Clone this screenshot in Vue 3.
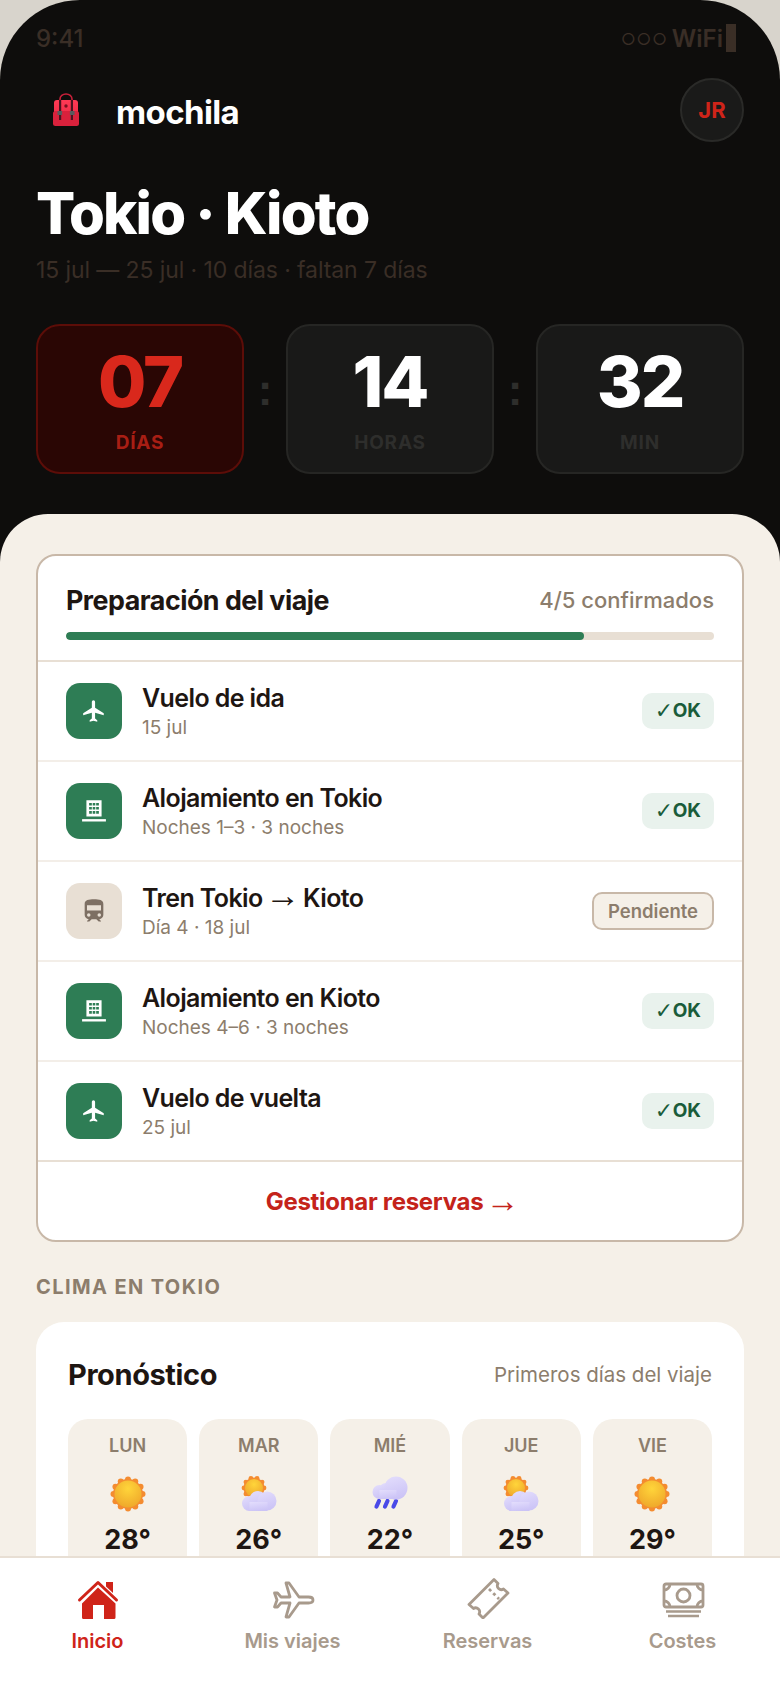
<template>
  <div class="phone">
    <div class="scroll">
      <header class="hero">
        <div class="status">
          <span class="time">9:41</span>
          <span class="status-right">
            <span class="dots">○○○</span>
            <span>WiFi</span>
            <span class="battery"></span>
          </span>
        </div>

        <div class="topbar">
          <div class="brand">
            <span class="logo">
              <svg viewBox="0 0 28 34" width="28" height="34">
                <defs>
                  <linearGradient id="bag" x1="0" y1="0" x2="0" y2="1">
                    <stop offset="0" stop-color="#ff3a55" />
                    <stop offset="1" stop-color="#e8243f" />
                  </linearGradient>
                </defs>
                <path d="M8 8V6a6 5 0 0 1 12 0v2" fill="none" stroke="#c8203a" stroke-width="1.6" />
                <path d="M5 7h18a3 3 0 0 1 3 3v22H2V10a3 3 0 0 1 3-3z" fill="url(#bag)" />
                <rect x="1" y="18" width="26" height="15" rx="2.5" fill="#d9213c" />
                <rect x="7" y="7" width="2.2" height="20" fill="#4a1420" />
                <rect x="18.800" y="7" width="2.2" height="20" fill="#4a1420" />
                <rect x="5.500" y="18" width="4.600" height="4" fill="#5a5a5e" />
                <rect x="17.900" y="18" width="4.600" height="4" fill="#5a5a5e" />
                <circle cx="14" cy="13" r="1.700" fill="#7a1020" />
              </svg>
            </span>
            <span class="brand-name">mochila</span>
          </div>
          <div class="avatar">JR</div>
        </div>

        <h1 class="trip">Tokio · Kioto</h1>
        <p class="dates">15 jul — 25 jul · 10 días · faltan 7 días</p>

        <div class="countdown">
          <template v-for="(c, i) in countdown" :key="c.label">
            <span v-if="i > 0" class="colon">:</span>
            <div class="count" :class="{ hot: c.hot }">
              <div class="count-num">{{ c.value }}</div>
              <div class="count-label">{{ c.label }}</div>
            </div>
          </template>
        </div>
      </header>

      <main class="sheet">
        <section class="prep">
          <div class="prep-head">
            <div class="prep-title">
              <h2>Preparación del viaje</h2>
              <span>4/5 confirmados</span>
            </div>
            <div class="bar"><div class="bar-fill" :style="{ width: progress + '%' }"></div></div>
          </div>

          <div v-for="b in bookings" :key="b.title" class="row">
            <span class="row-icon" :class="{ pending: !b.ok }">
              <svg v-if="b.icon === 'plane'" viewBox="0 0 24 24" width="26" height="26" fill="#fff">
                <path d="M21 16v-2l-8-5V3.500a1.500 1.500 0 0 0-3 0V9l-8 5v2l8-2.500V19l-2 1.500V22l3.500-1 3.500 1v-1.500L13 19v-5.500z" />
              </svg>
              <svg v-else-if="b.icon === 'hotel'" viewBox="0 0 24 24" width="26" height="26">
                <path fill="#fff" fill-rule="evenodd" d="M5 2h14v15H5zM7.500 4.500v2.500h2.500V4.500zM10.800 4.500v2.500h2.400V4.500zM14 4.500v2.500h2.500V4.500zM7.500 8.200v2.500h2.500V8.200zM10.800 8.200v2.500h2.400V8.200zM14 8.200v2.500h2.500V8.200zM7.500 12v2.500h2.500V12zM10.800 12v2.500h2.400V12zM14 12v2.500h2.500V12z" />
                <rect x="1" y="19.500" width="22" height="2.200" fill="#fff" />
              </svg>
              <svg v-else viewBox="0 0 24 24" width="28" height="28" fill="#7d6f63">
                <path fill-rule="evenodd" d="M12 2c-4.500 0-8 .5-8 4v9.500C4 17.400 5.600 19 7.500 19L6 20.500V21h2l2-2h4l2 2h2v-.5L16.500 19c1.900 0 3.500-1.600 3.500-3.500V6c0-3.500-3.500-4-8-4zM6 7h12v4.500H6zM7.500 14a1.500 1.500 0 1 0 0 3 1.500 1.500 0 0 0 0-3zm9 0a1.500 1.500 0 1 0 0 3 1.500 1.500 0 0 0 0-3z" />
              </svg>
            </span>
            <div class="row-text">
              <div class="row-title">
                <template v-if="b.to">{{ b.title }} <span class="arrow">→</span> {{ b.to }}</template>
                <template v-else>{{ b.title }}</template>
              </div>
              <div class="row-sub">{{ b.sub }}</div>
            </div>
            <span v-if="b.ok" class="tag ok"><span class="check">✓</span>OK</span>
            <span v-else class="tag wait">Pendiente</span>
          </div>

          <div class="manage">Gestionar reservas&nbsp;<span class="arrow">→</span></div>
        </section>

        <h3 class="section">CLIMA EN TOKIO</h3>

        <section class="weather">
          <div class="weather-head">
            <h2>Pronóstico</h2>
            <span>Primeros días del viaje</span>
          </div>
          <div class="days">
            <div v-for="d in days" :key="d.name" class="day">
              <div class="day-name">{{ d.name }}</div>
              <svg class="day-icon" viewBox="0 0 36 36" width="36" height="36">
                <defs>
                  <radialGradient :id="'s' + d.name" cx="0.5" cy="0.3" r="0.75">
                    <stop offset="0" stop-color="#ffd53a" />
                    <stop offset="1" stop-color="#eea52a" />
                  </radialGradient>
                  <linearGradient :id="'c' + d.name" x1="0.2" y1="0" x2="0.5" y2="1">
                    <stop offset="0" stop-color="#e2dcfc" />
                    <stop offset="1" stop-color="#cbc3f6" />
                  </linearGradient>
                </defs>
                <g v-if="d.kind === 'sun'">
                  <circle v-for="n in 12" :key="n" :cx="18 + 14.500 * Math.cos(n * 0.5236)" :cy="18 + 14.500 * Math.sin(n * 0.5236)" r="3" fill="#f48c30" />
                  <circle cx="18" cy="18" r="15" fill="#f48c30" />
                  <circle cx="18" cy="18" r="13.500" :fill="`url(#s${d.name})`" />
                </g>
                <g v-else-if="d.kind === 'cloud'">
                  <circle v-for="n in 10" :key="n" :cx="13 + 10 * Math.cos(n * 0.6283)" :cy="12 + 10 * Math.sin(n * 0.6283)" r="2.400" fill="#f48c30" />
                  <circle cx="13" cy="12" r="10.500" fill="#f48c30" />
                  <circle cx="13" cy="12" r="9" :fill="`url(#s${d.name})`" />
                  <g :fill="`url(#c${d.name})`">
                    <circle cx="8.500" cy="27.500" r="7.500" />
                    <circle cx="17" cy="24" r="9" />
                    <circle cx="26" cy="25" r="9.500" />
                    <rect x="8.500" y="26" width="18" height="9" />
                  </g>
                </g>
                <g v-else>
                  <path d="M7 25l-2.500 5.500M15.500 25 13 30.500M24 25l-2.500 5.500" stroke="#4a4ae8" stroke-width="4.200" stroke-linecap="round" fill="none" />
                  <g :fill="`url(#c${d.name})`">
                    <circle cx="7.500" cy="16" r="7" />
                    <circle cx="14" cy="14" r="7" />
                    <circle cx="24" cy="12" r="11.500" />
                    <rect x="7.500" y="14" width="17" height="9" />
                  </g>
                </g>
              </svg>
              <div class="day-temp">{{ d.temp }}</div>
            </div>
          </div>
        </section>
      </main>
    </div>

    <nav class="nav">
      <div v-for="n in nav" :key="n.label" class="nav-item" :class="{ active: n.active }">
        <svg v-if="n.icon === 'home'" viewBox="0 0 44 44" width="44" height="44">
          <path d="M3.500 25 22 7.500 40.500 25" fill="none" stroke="#cf2419" stroke-width="3" stroke-linecap="round" stroke-linejoin="round" />
          <path d="M30 7h7v11l-7-6.500z" fill="#cf2419" />
          <path fill="#cf2419" d="M22 12.500 39.500 28.500V42.500a1.500 1.500 0 0 1-1.500 1.500H28V30H17V44H7.500A1.500 1.500 0 0 1 6 42.500V28.500z" />
        </svg>
        <svg v-else-if="n.icon === 'plane'" viewBox="0 0 44 44" width="44" height="44" fill="none" stroke="#a89a8c" stroke-width="2.800" stroke-linejoin="round">
          <path d="M42 25c0-2-2-3-4.500-3H28L18 8h-3l4 14H10l-3.500-4H3.500L6 25l-2.500 7h3L10 28h9l-4 14h3l10-14h9.500C40 28 42 27 42 25z" />
        </svg>
        <svg v-else-if="n.icon === 'ticket'" viewBox="0 0 44 44" width="44" height="44" fill="none" stroke="#a89a8c" stroke-width="2.800" stroke-linejoin="round">
          <path d="M28 4.500 32 8.500a4 4 0 0 0 5.500 5.500L42 18 17 43 13 39a4 4 0 0 0-5.500-5.500L3 29.500z" />
          <path d="M23 14l10 10" stroke-dasharray="3 3" />
        </svg>
        <svg v-else viewBox="0 0 44 44" width="44" height="44" fill="none" stroke="#a89a8c" stroke-width="2.800">
          <rect x="3" y="9" width="39" height="23" rx="2" />
          <circle cx="22.500" cy="20.500" r="6.500" />
          <path d="M3 15a6 6 0 0 0 6-6M36 9a6 6 0 0 0 6 6M3 26a6 6 0 0 1 6 6M36 32a6 6 0 0 1 6-6" />
          <path d="M5 36.500h35M7 41h31" stroke-width="2.400" />
        </svg>
        <span class="nav-label">{{ n.label }}</span>
      </div>
    </nav>
  </div>
</template>

<script setup>
const progress = 80

const countdown = [
  { value: '07', label: 'DÍAS', hot: true },
  { value: '14', label: 'HORAS' },
  { value: '32', label: 'MIN' },
]

const bookings = [
  { title: 'Vuelo de ida', sub: '15 jul', icon: 'plane', ok: true },
  { title: 'Alojamiento en Tokio', sub: 'Noches 1–3 · 3 noches', icon: 'hotel', ok: true },
  { title: 'Tren Tokio', to: 'Kioto', sub: 'Día 4 · 18 jul', icon: 'train', ok: false },
  { title: 'Alojamiento en Kioto', sub: 'Noches 4–6 · 3 noches', icon: 'hotel', ok: true },
  { title: 'Vuelo de vuelta', sub: '25 jul', icon: 'plane', ok: true },
]

const days = [
  { name: 'LUN', temp: '28°', kind: 'sun' },
  { name: 'MAR', temp: '26°', kind: 'cloud' },
  { name: 'MIÉ', temp: '22°', kind: 'rain' },
  { name: 'JUE', temp: '25°', kind: 'cloud' },
  { name: 'VIE', temp: '29°', kind: 'sun' },
]

const nav = [
  { label: 'Inicio', icon: 'home', active: true },
  { label: 'Mis viajes', icon: 'plane' },
  { label: 'Reservas', icon: 'ticket' },
  { label: 'Costes', icon: 'money' },
]
</script>

<style>
html, body {
  margin: 0;
  background: #d8d4cc;
}
</style>

<style scoped>
* {
  box-sizing: border-box;
}

.phone {
  width: 780px;
  height: 1688px;
  display: flex;
  flex-direction: column;
  overflow: hidden;
  border-radius: 80px 80px 0 0;
  background: #0e0d0c;
  font-family: Inter, "Liberation Sans", sans-serif;
}

.scroll {
  flex: 1;
  min-height: 0;
  overflow: hidden;
}

.hero {
  height: 514px;
  padding: 0 36px;
  color: #fff;
}

.status {
  height: 78px;
  padding: 24px 8px 0 0;
  display: flex;
  justify-content: space-between;
  align-items: flex-start;
  font-size: 24px;
  line-height: 30px;
  font-weight: 500;
  color: #3a2e26;
}

.status-right {
  display: flex;
  align-items: flex-start;
  gap: 3px;
  font-weight: 600;
}

.dots {
  margin-right: 1px;
  font-size: 16px;
  font-weight: 400;
  letter-spacing: 1px;
}

.battery {
  width: 10px;
  height: 28px;
  background: #3a2e26;
}

.topbar {
  display: flex;
  justify-content: space-between;
  align-items: center;
}

.brand {
  display: flex;
  align-items: center;
  gap: 36px;
  padding-left: 16px;
}

.logo {
  display: flex;
}

.brand-name {
  margin-top: 4px;
  font-size: 33px;
  font-weight: 700;
  letter-spacing: -0.6px;
}

.avatar {
  width: 64px;
  height: 64px;
  border-radius: 50%;
  background: #1a1a19;
  border: 2px solid #2a2a28;
  display: flex;
  align-items: center;
  justify-content: center;
  color: #cf2419;
  font-size: 22px;
  font-weight: 700;
}

.trip {
  margin: 35px 0 0;
  font-size: 58px;
  line-height: 72px;
  font-weight: 800;
  letter-spacing: -1.8px;
}

.dates {
  margin: 6px 0 0;
  font-size: 23px;
  line-height: 30px;
  letter-spacing: -0.1px;
  color: #3a2e26;
}

.countdown {
  margin-top: 39px;
  display: grid;
  grid-template-columns: 1fr 42px 1fr 42px 1fr;
  align-items: stretch;
}

.count {
  height: 150px;
  padding-top: 14px;
  border-radius: 24px;
  border: 2px solid #262624;
  background: #191918;
  text-align: center;
}

.count.hot {
  background: #2a0604;
  border-color: #5c0d08;
}

.colon {
  padding-top: 36px;
  text-align: center;
  font-family: "Liberation Sans", sans-serif;
  font-size: 44px;
  line-height: 60px;
  font-weight: 700;
  color: #2e2e2c;
}

.count-num {
  font-size: 70px;
  line-height: 84px;
  font-weight: 800;
  letter-spacing: -2px;
  color: #fff;
}

.hot .count-num {
  color: #d9281c;
}

.count-label {
  margin-top: 7px;
  font-size: 19px;
  line-height: 24px;
  font-weight: 700;
  letter-spacing: 0.8px;
  color: #2e2e2c;
}

.hot .count-label {
  color: #a81e14;
}

.sheet {
  padding: 40px 36px 0;
  border-radius: 48px 48px 0 0;
  background: #f5f0e8;
}

.prep {
  border: 2px solid #c8b8a8;
  border-radius: 20px;
  background: #fff;
  overflow: hidden;
}

.prep-head {
  height: 106px;
  padding: 24px 28px 0;
  border-bottom: 2px solid #e8dfd4;
}

.prep-title {
  display: flex;
  justify-content: space-between;
  align-items: center;
  height: 40px;
}

.prep-title h2 {
  margin: 0;
  font-size: 26.800px;
  font-weight: 700;
  letter-spacing: -0.5px;
  color: #1e1612;
}

.prep-title span {
  font-size: 22px;
  font-weight: 500;
  color: #8c7d6c;
}

.bar {
  margin-top: 12px;
  height: 8px;
  border-radius: 4px;
  background: #e8dfd4;
  overflow: hidden;
}

.bar-fill {
  height: 100%;
  border-radius: 4px;
  background: #2e7d55;
}

.row {
  height: 100px;
  padding: 2px 28px 0;
  display: flex;
  align-items: center;
  gap: 20px;
  border-bottom: 2px solid #f3eee8;
}

.row:nth-last-child(2) {
  border-bottom: 2px solid #e8dfd4;
}

.row-icon {
  flex: none;
  width: 56px;
  height: 56px;
  margin-top: -2px;
  border-radius: 14px;
  background: #2e7d55;
  display: flex;
  align-items: center;
  justify-content: center;
}

.row-icon.pending {
  background: #e8dfd4;
}

.row-text {
  flex: 1;
  min-width: 0;
}

.row-title {
  font-size: 25px;
  line-height: 31px;
  font-weight: 600;
  letter-spacing: -0.6px;
  color: #1e1612;
}

.arrow {
  margin: 0 -3px;
  font-family: "Liberation Sans", sans-serif;
  font-size: 1.4em;
  line-height: 0;
  font-weight: 400;
  letter-spacing: 0;
}

.row-sub {
  margin-top: 1px;
  font-size: 19px;
  line-height: 26px;
  color: #8c7d6c;
}

.tag {
  margin-top: -2px;
  font-size: 20px;
  font-weight: 700;
  line-height: 36px;
  border-radius: 10px;
}

.tag.ok {
  padding: 0 13px;
  display: flex;
  align-items: center;
  height: 36px;
  background: #e9f2ed;
  color: #1a5c3a;
  font-size: 19px;
}

.check {
  width: 18px;
  font-family: "DejaVu Sans", sans-serif;
  font-size: 22px;
  font-weight: 400;
}

.tag.wait {
  padding: 0 14px;
  background: #f5f0e8;
  border: 2px solid #c8b8a8;
  color: #8c7d6c;
  font-size: 18.500px;
  line-height: 34px;
  font-weight: 600;
}

.manage {
  height: 78px;
  padding-left: 2px;
  display: flex;
  align-items: center;
  justify-content: center;
  font-size: 24px;
  font-weight: 700;
  letter-spacing: -0.3px;
  color: #c4231a;
}

.section {
  margin: 33px 0 0;
  height: 47px;
  font-size: 20px;
  line-height: 24px;
  font-weight: 700;
  letter-spacing: 1.4px;
  color: #8c7d6c;
}

.weather {
  padding: 30px 32px 0;
  border-radius: 28px 28px 0 0;
  background: #fff;
}

.weather-head {
  display: flex;
  justify-content: space-between;
  align-items: center;
  height: 44px;
}

.weather-head h2 {
  margin: 0;
  font-size: 29px;
  font-weight: 700;
  letter-spacing: -0.4px;
  color: #1e1612;
}

.weather-head span {
  font-size: 20.500px;
  color: #8c7d6c;
}

.days {
  margin-top: 23px;
  display: grid;
  grid-template-columns: repeat(5, 1fr);
  gap: 12px;
}

.day {
  height: 138px;
  padding-top: 14px;
  border-radius: 20px 20px 0 0;
  background: #f5f0e8;
  text-align: center;
}

.day-name {
  font-size: 18px;
  line-height: 26px;
  font-weight: 600;
  color: #8c7d6c;
}

.day-icon {
  display: block;
  margin: 17px auto 0;
}

.day-temp {
  margin-top: 15px;
  font-size: 27px;
  line-height: 26px;
  font-weight: 700;
  color: #1e1612;
}

.nav {
  flex: none;
  height: 132px;
  padding-top: 17px;
  display: grid;
  grid-template-columns: repeat(4, 1fr);
  background: #fff;
  border-top: 2px solid #e8dfd4;
}

.nav-item {
  display: flex;
  flex-direction: column;
  align-items: center;
  gap: 8px;
}

.nav-label {
  font-size: 20px;
  line-height: 28px;
  font-weight: 600;
  color: #a89a8c;
}

.active .nav-label {
  color: #cf2419;
}
</style>
